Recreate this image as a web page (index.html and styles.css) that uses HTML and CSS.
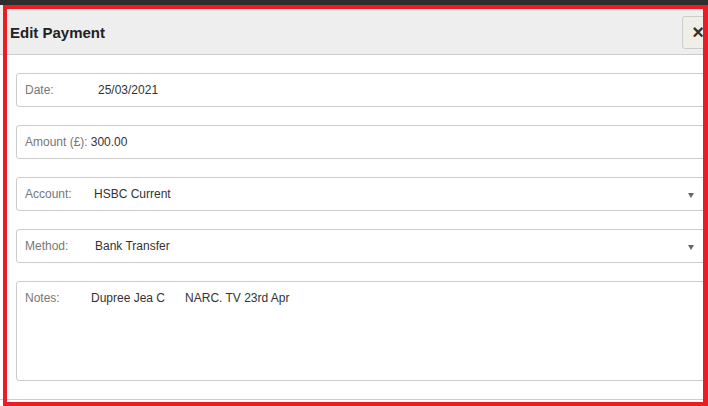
FILE: index.html
```html
<!DOCTYPE html>
<html>
<head>
<meta charset="utf-8">
<title>Edit Payment</title>
<link rel="stylesheet" href="styles.css">
</head>
<body>
<div class="topbar"></div>
<div class="modal">
	<div class="modal-header">
		<h4>Edit Payment</h4>
		<button type="button" class="close">&times;</button>
	</div>
	<div class="modal-body">
		<div class="field">
			<span class="label w-date">Date:</span>
			<span class="value">25/03/2021</span>
		</div>
		<div class="field">
			<span class="label w-amount">Amount (&pound;):</span>
			<span class="value">300.00</span>
		</div>
		<div class="field">
			<span class="label w-account">Account:</span>
			<span class="value">HSBC Current</span>
			<span class="caret"></span>
		</div>
		<div class="field">
			<span class="label w-method">Method:</span>
			<span class="value">Bank Transfer</span>
			<span class="caret"></span>
		</div>
		<div class="field notes">
			<span class="label w-notes">Notes:</span>
			<span class="value">Dupree Jea C<span class="gap"></span>NARC. TV 23rd Apr</span>
		</div>
	</div>
	<div class="modal-footer"></div>
</div>
<div class="highlight"></div>
</body>
</html>
```
FILE: styles.css
```css
html{height:100%; overflow:hidden;}
body{margin:0; height:100%; overflow:hidden; background:#fff; font-family:"Liberation Sans", Arial, sans-serif; font-size:12px;}

.topbar{height:5px; background:#2e2e2e;}

.modal{width:730px;}
.modal-header{display:flex; align-items:center; height:34px; padding:10px 16px 5px 10px; background:#eee; border-bottom:1px solid #ccc;}
.modal-header h4{margin:0; flex:1; font-size:15px; font-weight:bold; color:#222;}
.close{width:32px; height:33px; padding:0; border:1px solid #ccc; border-radius:3px; background:#efefe8; color:#333; font-family:"Liberation Sans", Arial, sans-serif; font-size:20px; font-weight:bold; line-height:1;}

.modal-body{padding:18px 16px 0 16px;}
.field{display:flex; align-items:center; box-sizing:border-box; height:34px; margin-bottom:18px; padding:0 19px 0 8px; border:1px solid #ccc; border-radius:3px;}
.field.notes{height:100px; align-items:flex-start; padding-top:9px;}
.label{color:#777; flex-shrink:0;}
.value{color:#333; white-space:nowrap;}
.w-date{width:73px;}
.w-amount{margin-right:3px;}
.w-account{width:69px;}
.w-method{width:70px;}
.w-notes{width:66px;}
.gap{display:inline-block; width:20px;}
.caret{margin-left:auto; margin-top:3px; width:0; height:0; border-left:3.5px solid transparent; border-right:3.5px solid transparent; border-top:5px solid #666;}

.modal-footer{height:20px; border-top:1px solid #ccc;}

.highlight{position:fixed; left:3px; top:5px; right:0; bottom:0; border:4px solid #ed1c24; border-right-width:5px; pointer-events:none;}
```
